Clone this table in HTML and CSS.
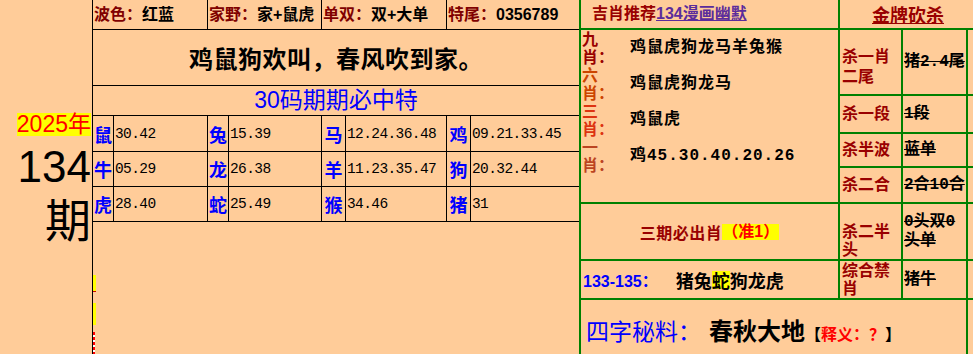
FILE: index.html
```html
<!DOCTYPE html>
<html lang="zh">
<head>
<meta charset="utf-8">
<title>2025年134期</title>
<link rel="stylesheet" href="styles.css">
</head>
<body>
<div class="page">
  <div class="issue">
    <div class="year">2025年</div>
    <div class="num">134</div>
    <div class="qi">期</div>
  </div>

  <div class="mid">
    <div class="mgrid">
      <div class="tag span2"><span class="lbl">波色：</span>红蓝</div>
      <div class="tag span2"><span class="lbl">家野：</span>家+鼠虎</div>
      <div class="tag span2"><span class="lbl">单双：</span>双+大单</div>
      <div class="tag span2"><span class="lbl">特尾：</span>0356789</div>
      <div class="poem span8">鸡鼠狗欢叫，春风吹到家。</div>
      <div class="title30 span8">30码期期必中特</div>

      <div class="zx">鼠</div><div class="nums">30.42</div>
      <div class="zx">兔</div><div class="nums">15.39</div>
      <div class="zx">马</div><div class="nums">12.24.36.48</div>
      <div class="zx">鸡</div><div class="nums">09.21.33.45</div>

      <div class="zx">牛</div><div class="nums">05.29</div>
      <div class="zx">龙</div><div class="nums">26.38</div>
      <div class="zx">羊</div><div class="nums">11.23.35.47</div>
      <div class="zx">狗</div><div class="nums">20.32.44</div>

      <div class="zx">虎</div><div class="nums">28.40</div>
      <div class="zx">蛇</div><div class="nums">25.49</div>
      <div class="zx">猴</div><div class="nums">34.46</div>
      <div class="zx">猪</div><div class="nums">31</div>
    </div>
    <div class="marks">
      <span class="mark mark1"></span>
      <span class="mark mark2"></span>
      <span class="mark mark3"></span>
    </div>
  </div>

  <div class="rgrid">
    <div class="rec">吉肖推荐<a class="rec-link" href="#">134漫画幽默</a></div>
    <div class="gold"><span>金牌砍杀</span></div>

    <div class="picks">
      <div class="plabels">
        <div class="pl c1">九<br>肖：</div>
        <div class="pl c2">六<br>肖：</div>
        <div class="pl c3">三<br>肖：</div>
        <div class="pl c4">一<br>肖：</div>
      </div>
      <div class="plines">
        <div>鸡鼠虎狗龙马羊兔猴</div>
        <div>鸡鼠虎狗龙马</div>
        <div>鸡鼠虎</div>
        <div>鸡45.30.40.20.26</div>
      </div>
    </div>
    <div class="kl kl-two">杀一肖二尾</div>
    <div class="kv">猪2.4尾</div>
    <div class="dd"></div>

    <div class="kl">杀一段</div>
    <div class="kv">1段</div>
    <div class="dd"></div>

    <div class="kl">杀半波</div>
    <div class="kv">蓝单</div>
    <div class="dd"></div>

    <div class="kl">杀二合</div>
    <div class="kv">2合10合</div>
    <div class="dd"></div>

    <div class="three">三期必出肖<span class="zhun">（准1）</span></div>
    <div class="kl kl-half">杀二半头</div>
    <div class="kv kv-two">0头双0头单</div>
    <div class="dd"></div>

    <div class="range"><span class="rng">133-135：</span><span class="rz">猪兔<span class="hl">蛇</span>狗龙虎</span></div>
    <div class="kl">综合禁肖</div>
    <div class="kv">猪牛</div>
    <div class="dd"></div>

    <div class="secret"><span class="sz">四字秘料：</span><span class="cq">春秋大地</span><span class="sy">【<span class="sy-red">释义：？</span>】</span></div>
    <div class="dd"></div>
  </div>
</div>
</body>
</html>
```

FILE: styles.css
```css
* { box-sizing: border-box; }

html, body {
  margin: 0;
  padding: 0;
}

body {
  background: #ffcc99;
  font-family: "Noto Sans CJK SC", sans-serif;
  color: #000;
  overflow: hidden;
}

.page {
  display: flex;
  align-items: stretch;
  width: max-content;
  height: 354px;
}

/* ---------- left issue column ---------- */
.issue {
  width: 93px;
  flex: none;
  border-right: 1px solid #000;
  display: flex;
  flex-direction: column;
  align-items: flex-end;
  padding: 113px 1px 0 0;
}

.year {
  font-family: "Liberation Sans", "Noto Sans CJK SC", sans-serif;
  font-size: 23px;
  line-height: 23px;
  color: #ff0000;
  background: #ffff00;
}

.num {
  font-family: "Liberation Sans", sans-serif;
  font-size: 44px;
  line-height: 50px;
  margin-top: 6px;
}

.qi {
  font-family: "Liberation Serif", "Noto Sans CJK SC", serif;
  font-size: 46px;
  line-height: 52px;
  margin-top: 4px;
}

/* ---------- middle table ---------- */
.mid {
  width: 486px;
  flex: none;
  display: flex;
  flex-direction: column;
}

.mgrid {
  display: grid;
  grid-template-columns: 20px 93px 20px 92px 23px 100px 23px 108px;
  grid-template-rows: 29px 55px 29px 35px 34px 34px;
  gap: 1px;
  background: #000;
  border-bottom: 1px solid #000;
}

.mgrid > div {
  background: #ffcc99;
}

.span2 { grid-column: span 2; }
.span8 { grid-column: span 8; }

.tag {
  font-family: "Liberation Sans", "Noto Sans CJK SC", sans-serif;
  font-size: 16px;
  font-weight: bold;
  line-height: 29px;
  padding-left: 1px;
  white-space: nowrap;
}

.lbl {
  color: #800000;
}

.poem {
  font-size: 24px;
  font-weight: bold;
  letter-spacing: 0.5px;
  line-height: 55px;
  text-align: center;
}

.title30 {
  font-family: "Liberation Sans", "Noto Sans CJK SC", sans-serif;
  font-size: 23px;
  line-height: 29px;
  text-align: center;
  color: #0000ff;
}

.zx {
  display: flex;
  align-items: center;
  justify-content: center;
  font-size: 18px;
  font-weight: bold;
  color: #0000ff;
  line-height: 20px;
}

.nums {
  display: flex;
  align-items: center;
  padding-left: 1px;
  font-family: "Liberation Mono", monospace;
  font-size: 14.5px;
  letter-spacing: -0.6px;
  line-height: 16px;
}

.marks {
  display: flex;
  flex-direction: column;
  align-items: flex-start;
}

.mark {
  display: block;
  width: 3px;
}

.mark1 {
  margin-top: 53px;
  height: 17px;
  background: #ffff00;
  border-bottom: 1px solid #d00000;
}

.mark2 {
  margin-top: 11px;
  height: 22px;
  background: #ffff00;
}

.mark3 {
  margin-top: 7px;
  width: 2px;
  height: 22px;
  background: repeating-linear-gradient(to bottom, #ff0000 0 3px, #ffffff 3px 5px);
}

/* ---------- right table ---------- */
.rgrid {
  flex: none;
  align-self: flex-start;
  display: grid;
  grid-template-columns: 257px 61px 63px 8px;
  grid-template-rows: 28px 64px 36px 32px 34px 55px 37px 60px;
  gap: 2px;
  padding: 0 2px;
  background: #008000;
}

.rgrid > div {
  background: #ffcc99;
}

.rec {
  font-family: "Liberation Sans", "Noto Sans CJK SC", sans-serif;
  font-size: 16px;
  font-weight: bold;
  line-height: 28px;
  padding-left: 11px;
  color: #990000;
  white-space: nowrap;
}

.rec-link {
  color: #5b2c9c;
  text-decoration: underline;
}

.gold {
  grid-column: 2 / 5;
  text-align: center;
  font-size: 18px;
  font-weight: bold;
  line-height: 28px;
  color: #990000;
}

.gold span {
  text-decoration: underline;
}

.picks {
  grid-row: 2 / 6;
  display: flex;
  align-items: flex-start;
}

.plabels {
  width: 49px;
  flex: none;
  padding: 1px 0 0 1px;
  font-family: "Liberation Serif", "Noto Sans CJK SC", serif;
  font-size: 16px;
  font-weight: bold;
  line-height: 18px;
  white-space: nowrap;
}

.c1 { color: #990000; }
.c2 { color: #cc4400; }
.c3 { color: #dd3311; }
.c4 { color: #bb4422; }

.plines {
  font-family: "Liberation Mono", "Noto Sans CJK SC", monospace;
  font-size: 16px;
  font-weight: bold;
  letter-spacing: 1px;
  line-height: 36px;
  white-space: nowrap;
}

.kl {
  display: flex;
  align-items: center;
  padding-left: 2px;
  font-family: "Liberation Serif", "Noto Sans CJK SC", serif;
  font-size: 16px;
  font-weight: bold;
  line-height: 18px;
  color: #990000;
}

.kl-two {
  line-height: 20px;
  padding-top: 10px;
}

.kl-half {
  line-height: 18px;
  padding-top: 18px;
}

.kv {
  display: flex;
  align-items: center;
  padding-left: 1px;
  font-family: "Liberation Mono", "Noto Sans CJK SC", monospace;
  font-size: 16px;
  font-weight: bold;
  line-height: 18px;
  text-decoration: line-through;
}

.kv-two {
  line-height: 19px;
}

.three {
  display: flex;
  align-items: center;
  justify-content: center;
  font-family: "Liberation Sans", "Noto Sans CJK SC", sans-serif;
  font-size: 16px;
  font-weight: bold;
  letter-spacing: 0.5px;
  color: #990000;
}

.zhun {
  display: inline-block;
  line-height: 16px;
  color: #ff0000;
  background: #ffff00;
  letter-spacing: 0;
}

.range {
  display: flex;
  align-items: center;
  padding-left: 2px;
  white-space: nowrap;
}

.rng {
  font-family: "Liberation Sans", "Noto Sans CJK SC", sans-serif;
  font-size: 16px;
  font-weight: bold;
  color: #0000ff;
}

.rz {
  margin-left: 18px;
  font-size: 18px;
  font-weight: bold;
  line-height: 18px;
}

.hl {
  display: inline-block;
  line-height: 18px;
  background: #ffff00;
}

.secret {
  grid-column: 1 / 4;
  display: flex;
  align-items: baseline;
  padding: 15px 0 0 5px;
  line-height: 30px;
  white-space: nowrap;
}

.sz {
  font-size: 23px;
  color: #0000ff;
}

.cq {
  margin-left: 8px;
  font-size: 24px;
  font-weight: bold;
}

.sy {
  font-size: 16px;
  font-weight: bold;
}

.sy-red {
  color: #ff0000;
}
```
